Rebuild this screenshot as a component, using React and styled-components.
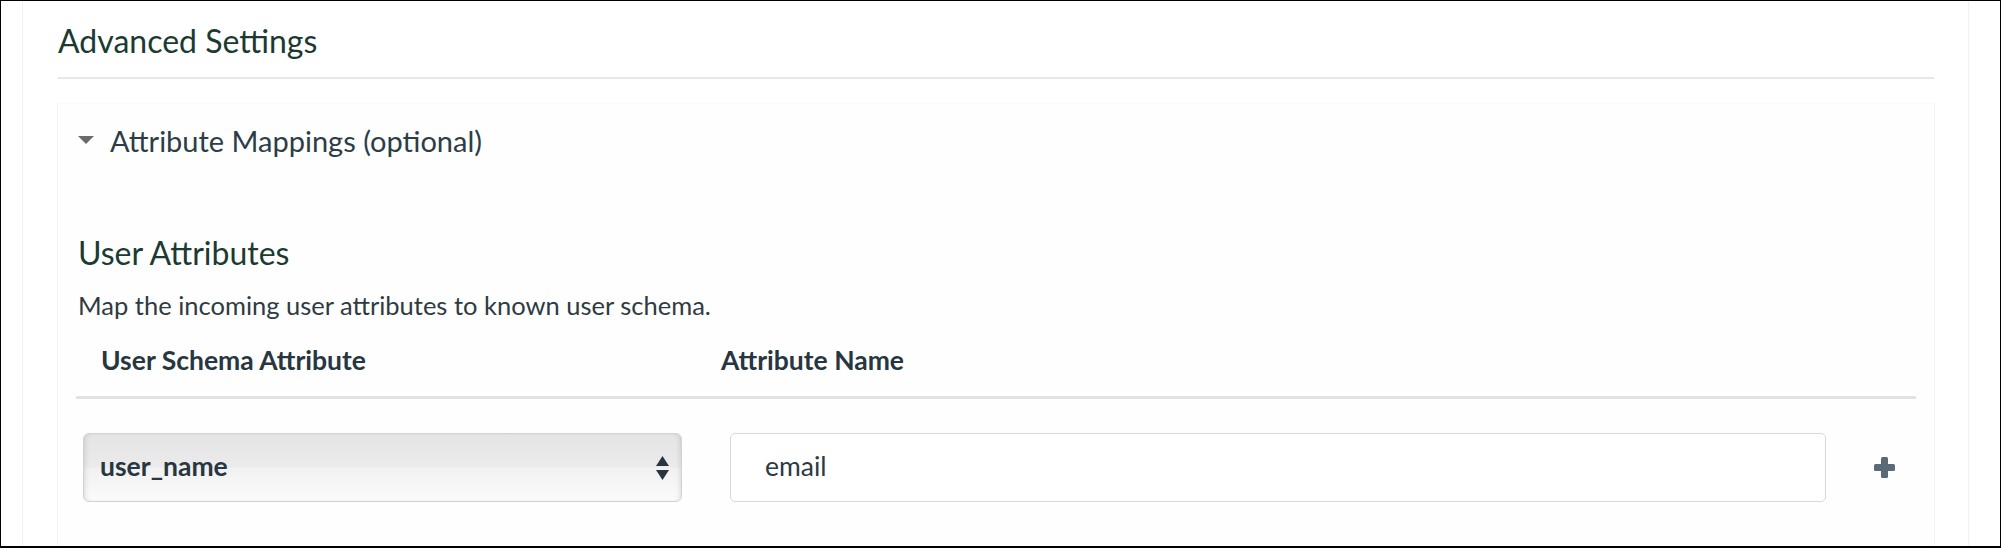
import React from "react";
import styled, { createGlobalStyle } from "styled-components";

const GlobalStyle = createGlobalStyle`
  html, body {
    margin: 0;
    padding: 0;
    background: #ffffff;
  }
  body {
    font-family: Lato, "Open Sans", sans-serif;
    -webkit-font-smoothing: antialiased;
  }
  * { box-sizing: border-box; }
`;

const Frame = styled.div`
  width: 2001px;
  height: 548px;
  border: 1px solid #000;
  border-bottom-width: 2px;
  display: flex;
  flex-direction: column;
  overflow: hidden;
  background: #fff;
`;

const Container = styled.div`
  flex: 1;
  display: flex;
  flex-direction: column;
  margin: 0 31px 0 21px;
  padding: 0 34px 0 35px;
  border-left: 1px solid #f2f2f2;
  border-right: 1px solid #f2f2f2;
  min-height: 0;
`;

const SectionTitle = styled.h2`
  margin: 20px 0 0;
  padding-bottom: 16px;
  border-bottom: 2px solid #e8e8e8;
  font-size: 32px;
  line-height: 40px;
  font-weight: 400;
  color: #1b3a32;
`;

const Panel = styled.section`
  flex: 1;
  margin-top: 24px;
  margin-left: -1px;
  margin-right: -1px;
  padding: 19px 18px 0 20px;
  border: 1px solid #f3f3f3;
  border-top-color: #fbfbfb;
  border-bottom: none;
  background: #fefefe;
  min-height: 0;
`;

const Toggle = styled.div`
  display: flex;
  align-items: center;
  gap: 16px;
  height: 36px;
  font-size: 29px;
  line-height: 36px;
  color: #2c3d47;
`;

const Caret = styled.span`
  width: 0;
  height: 0;
  margin-top: -2px;
  border-left: 8.5px solid transparent;
  border-right: 8.5px solid transparent;
  border-top: 8px solid #6b6b6b;
`;

const SubTitle = styled.h3`
  margin: 76px 0 0;
  font-size: 32px;
  line-height: 36px;
  font-weight: 400;
  color: #1b3a32;
`;

const Help = styled.p`
  margin: 19px 0 0;
  font-size: 25.5px;
  line-height: 30px;
  color: #2e3b42;
`;

const Table = styled.div`
  margin: 25px 0 0 -2px;
`;

const HeadRow = styled.div`
  display: grid;
  grid-template-columns: 620px 1fr;
  padding: 0 0 21px 25px;
  border-bottom: 3px solid #e2e2e2;
`;

const HeadCell = styled.div`
  font-size: 26.5px;
  line-height: 30px;
  font-weight: 700;
  color: #27363f;
`;

const Row = styled.div`
  display: grid;
  grid-template-columns: 599px 1fr 21px;
  column-gap: 48px;
  align-items: center;
  padding: 34px 21px 0 7px;
`;

const SelectBox = styled.div`
  height: 69px;
  display: flex;
  align-items: center;
  justify-content: space-between;
  padding: 0 12px 3px 16px;
  border: 1px solid #d2d2d2;
  border-radius: 6px;
  background: linear-gradient(
    to bottom,
    #e4e4e4 0%,
    #ebebeb 49%,
    #f1f1f1 51%,
    #fbfbfb 100%
  );
  box-shadow: inset 4px 0 5px -3px rgba(0, 0, 0, 0.12),
    inset -4px 0 5px -3px rgba(0, 0, 0, 0.12);
  font-size: 26.5px;
  font-weight: 700;
  color: #273640;
`;

const Arrows = styled.svg`
  width: 13px;
  height: 24px;
  flex: none;
  margin-top: 3px;
`;

const TextInput = styled.input`
  height: 69px;
  width: 100%;
  padding: 0 16px 4px 34px;
  border: 1px solid #d6d9da;
  border-radius: 5px;
  background: #fff;
  font-family: Lato, "Open Sans", sans-serif;
  font-size: 26.5px;
  color: #2c3a42;
  outline: none;
`;

const AddButton = styled.button`
  width: 21px;
  height: 21px;
  padding: 0;
  border: none;
  background: none;
  display: flex;
  cursor: pointer;
`;

export default function App() {
  return (
    <>
      <GlobalStyle />
      <Frame>
        <Container>
          <SectionTitle>Advanced Settings</SectionTitle>
          <Panel>
            <Toggle>
              <Caret />
              <span>Attribute Mappings (optional)</span>
            </Toggle>
            <SubTitle>User Attributes</SubTitle>
            <Help>Map the incoming user attributes to known user schema.</Help>
            <Table>
              <HeadRow>
                <HeadCell>User Schema Attribute</HeadCell>
                <HeadCell>Attribute Name</HeadCell>
              </HeadRow>
              <Row>
                <SelectBox>
                  <span>user_name</span>
                  <Arrows viewBox="0 0 13 24">
                    <path d="M6.5 0 L13 10 L0 10 Z" fill="#263540" />
                    <path d="M0 14 L13 14 L6.5 24 Z" fill="#263540" />
                  </Arrows>
                </SelectBox>
                <TextInput value="email" readOnly />
                <AddButton aria-label="Add">
                  <svg width="21" height="21" viewBox="0 0 21 21">
                    <rect x="7" y="0" width="7" height="21" rx="1.5" fill="#5a6a76" />
                    <rect x="0" y="7" width="21" height="7" rx="1.5" fill="#5a6a76" />
                  </svg>
                </AddButton>
              </Row>
            </Table>
          </Panel>
        </Container>
      </Frame>
    </>
  );
}
